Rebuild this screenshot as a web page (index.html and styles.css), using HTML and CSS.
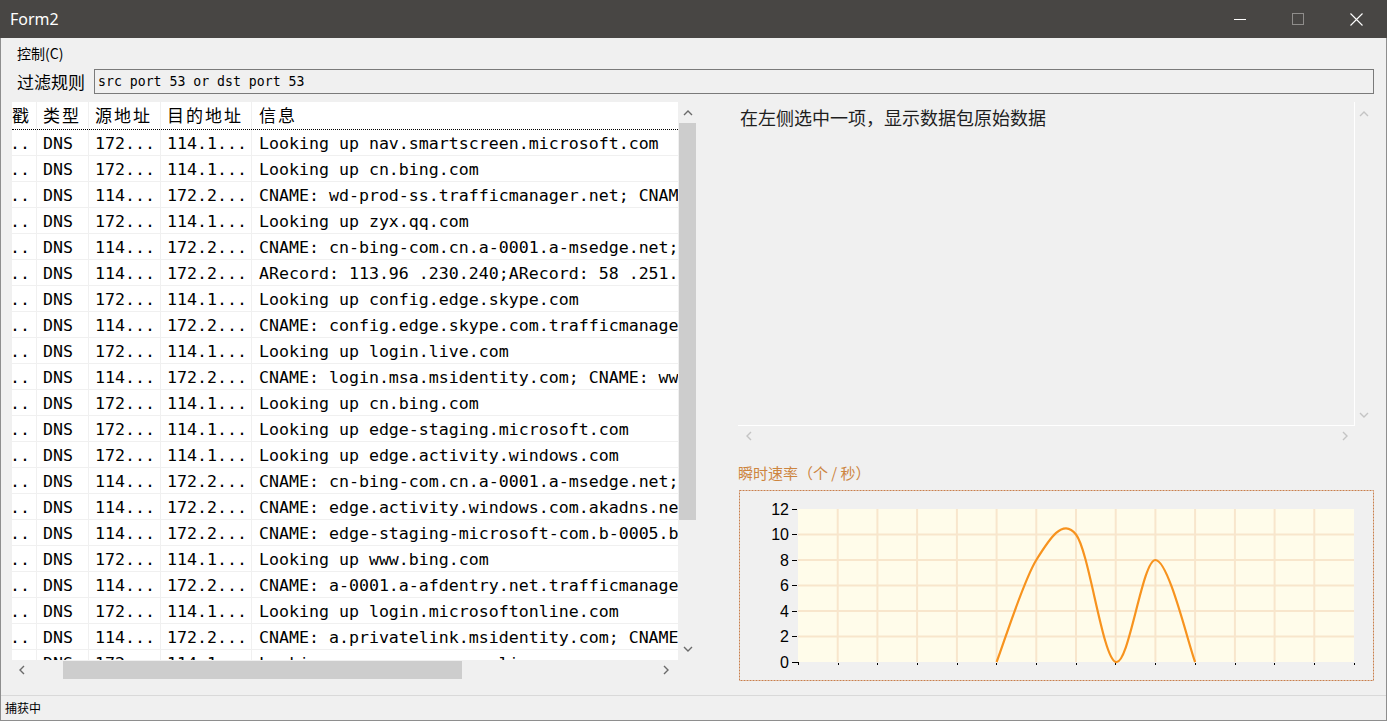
FILE: index.html
```html
<!DOCTYPE html>
<html lang="zh">
<head>
<meta charset="utf-8">
<title>Form2</title>
<link rel="stylesheet" href="styles.css">
</head>
<body>
<div class="window">
  <div class="titlebar">
    <span class="title">Form2</span>
    <div class="caption">
      <div class="cbtn"><svg width="12" height="12" viewBox="0 0 12 12"><line x1="0" y1="6.5" x2="12" y2="6.5" stroke="#fff" stroke-width="1"/></svg></div>
      <div class="cbtn"><svg width="12" height="12" viewBox="0 0 12 12"><rect x="0.5" y="0.5" width="11" height="11" fill="none" stroke="#8f8d8b" stroke-width="1"/></svg></div>
      <div class="cbtn"><svg width="13" height="13" viewBox="0 0 13 13"><path d="M0.5 0.5 L12.5 12.5 M12.5 0.5 L0.5 12.5" stroke="#fff" stroke-width="1.1" fill="none"/></svg></div>
    </div>
  </div>
  <div class="client">
    <div class="menubar"><span>控制(C)</span></div>
    <div class="filter">
      <span class="filter-label">过滤规则</span>
      <div class="filter-input">src port 53 or dst port 53</div>
    </div>
    <div class="main">
      <div class="left">
        <div class="gridarea">
          <div class="table">
            <div class="row head"><div class="c c1 hc1">戳</div><div class="c c2">类型</div><div class="c c3">源地址</div><div class="c c4">目的地址</div><div class="c c5">信息</div></div>
            <div class="row"><div class="c c1">..</div><div class="c c2">DNS</div><div class="c c3">172...</div><div class="c c4">114.1...</div><div class="c c5">Looking up nav.smartscreen.microsoft.com</div></div>
            <div class="row"><div class="c c1">..</div><div class="c c2">DNS</div><div class="c c3">172...</div><div class="c c4">114.1...</div><div class="c c5">Looking up cn.bing.com</div></div>
            <div class="row"><div class="c c1">..</div><div class="c c2">DNS</div><div class="c c3">114...</div><div class="c c4">172.2...</div><div class="c c5">CNAME: wd-prod-ss.trafficmanager.net; CNAME: wd-prod-ss-eu.cloudapp.net</div></div>
            <div class="row"><div class="c c1">..</div><div class="c c2">DNS</div><div class="c c3">172...</div><div class="c c4">114.1...</div><div class="c c5">Looking up zyx.qq.com</div></div>
            <div class="row"><div class="c c1">..</div><div class="c c2">DNS</div><div class="c c3">114...</div><div class="c c4">172.2...</div><div class="c c5">CNAME: cn-bing-com.cn.a-0001.a-msedge.net; CNAME: a-0001.a-msedge.net</div></div>
            <div class="row"><div class="c c1">..</div><div class="c c2">DNS</div><div class="c c3">114...</div><div class="c c4">172.2...</div><div class="c c5">ARecord: 113.96 .230.240;ARecord: 58 .251.111.106</div></div>
            <div class="row"><div class="c c1">..</div><div class="c c2">DNS</div><div class="c c3">172...</div><div class="c c4">114.1...</div><div class="c c5">Looking up config.edge.skype.com</div></div>
            <div class="row"><div class="c c1">..</div><div class="c c2">DNS</div><div class="c c3">114...</div><div class="c c4">172.2...</div><div class="c c5">CNAME: config.edge.skype.com.trafficmanager.net</div></div>
            <div class="row"><div class="c c1">..</div><div class="c c2">DNS</div><div class="c c3">172...</div><div class="c c4">114.1...</div><div class="c c5">Looking up login.live.com</div></div>
            <div class="row"><div class="c c1">..</div><div class="c c2">DNS</div><div class="c c3">114...</div><div class="c c4">172.2...</div><div class="c c5">CNAME: login.msa.msidentity.com; CNAME: www.tm.lg.prod.aadmsa.akadns.net</div></div>
            <div class="row"><div class="c c1">..</div><div class="c c2">DNS</div><div class="c c3">172...</div><div class="c c4">114.1...</div><div class="c c5">Looking up cn.bing.com</div></div>
            <div class="row"><div class="c c1">..</div><div class="c c2">DNS</div><div class="c c3">172...</div><div class="c c4">114.1...</div><div class="c c5">Looking up edge-staging.microsoft.com</div></div>
            <div class="row"><div class="c c1">..</div><div class="c c2">DNS</div><div class="c c3">172...</div><div class="c c4">114.1...</div><div class="c c5">Looking up edge.activity.windows.com</div></div>
            <div class="row"><div class="c c1">..</div><div class="c c2">DNS</div><div class="c c3">114...</div><div class="c c4">172.2...</div><div class="c c5">CNAME: cn-bing-com.cn.a-0001.a-msedge.net; CNAME: a-0001.a-msedge.net</div></div>
            <div class="row"><div class="c c1">..</div><div class="c c2">DNS</div><div class="c c3">114...</div><div class="c c4">172.2...</div><div class="c c5">CNAME: edge.activity.windows.com.akadns.net</div></div>
            <div class="row"><div class="c c1">..</div><div class="c c2">DNS</div><div class="c c3">114...</div><div class="c c4">172.2...</div><div class="c c5">CNAME: edge-staging-microsoft-com.b-0005.b-msedge.net</div></div>
            <div class="row"><div class="c c1">..</div><div class="c c2">DNS</div><div class="c c3">172...</div><div class="c c4">114.1...</div><div class="c c5">Looking up www.bing.com</div></div>
            <div class="row"><div class="c c1">..</div><div class="c c2">DNS</div><div class="c c3">114...</div><div class="c c4">172.2...</div><div class="c c5">CNAME: a-0001.a-afdentry.net.trafficmanager.net</div></div>
            <div class="row"><div class="c c1">..</div><div class="c c2">DNS</div><div class="c c3">172...</div><div class="c c4">114.1...</div><div class="c c5">Looking up login.microsoftonline.com</div></div>
            <div class="row"><div class="c c1">..</div><div class="c c2">DNS</div><div class="c c3">114...</div><div class="c c4">172.2...</div><div class="c c5">CNAME: a.privatelink.msidentity.com; CNAME: prda.aadg.msidentity.com</div></div>
            <div class="row"><div class="c c1">..</div><div class="c c2">DNS</div><div class="c c3">172...</div><div class="c c4">114.1...</div><div class="c c5">Looking up www.msn.cn.onlive.com</div></div>
          </div>
          <div class="vscroll">
            <div class="sbtn vbtn"><svg width="10" height="7" viewBox="0 0 10 7"><polyline points="1,6 5,2 9,6" fill="none" stroke="#6a6a6a" stroke-width="1.4"/></svg></div>
            <div class="vthumb"></div>
            <div class="spacer"></div>
            <div class="sbtn vbtn"><svg width="10" height="7" viewBox="0 0 10 7"><polyline points="1,1 5,5 9,1" fill="none" stroke="#6a6a6a" stroke-width="1.4"/></svg></div>
          </div>
        </div>
        <div class="hrow">
          <div class="hscroll">
            <div class="sbtn hbtn-l"><svg width="7" height="10" viewBox="0 0 7 10"><polyline points="6,1 2,5 6,9" fill="none" stroke="#6a6a6a" stroke-width="1.4"/></svg></div>
            <div class="hthumb"></div>
            <div class="spacer"></div>
            <div class="sbtn hbtn-r"><svg width="7" height="10" viewBox="0 0 7 10"><polyline points="1,1 5,5 1,9" fill="none" stroke="#6a6a6a" stroke-width="1.4"/></svg></div>
          </div>
          <div class="corner"></div>
        </div>
      </div>
      <div class="right">
        <div class="rawbox">
          <div class="rawtop">
            <div class="rawtext">在左侧选中一项，显示数据包原始数据</div>
            <div class="rawv">
              <div class="sbtn rbtn"><svg width="10" height="7" viewBox="0 0 10 7"><polyline points="1,6 5,2 9,6" fill="none" stroke="#c4c4c4" stroke-width="1.4"/></svg></div>
              <div class="spacer"></div>
              <div class="sbtn rbtn"><svg width="10" height="7" viewBox="0 0 10 7"><polyline points="1,1 5,5 9,1" fill="none" stroke="#c4c4c4" stroke-width="1.4"/></svg></div>
            </div>
          </div>
          <div class="rawh">
            <div class="sbtn rhbtn"><svg width="7" height="10" viewBox="0 0 7 10"><polyline points="6,1 2,5 6,9" fill="none" stroke="#c4c4c4" stroke-width="1.4"/></svg></div>
            <div class="sbtn rhbtn"><svg width="7" height="10" viewBox="0 0 7 10"><polyline points="1,1 5,5 1,9" fill="none" stroke="#c4c4c4" stroke-width="1.4"/></svg></div>
          </div>
        </div>
        <div class="chart-title">瞬时速率（个 / 秒）</div>
        <div class="chart">
          <svg width="635" height="191" viewBox="739 490 635 191">
            <rect x="739.5" y="490.5" width="634" height="190" fill="#f0f0f0" stroke="#c97f4c" stroke-width="1" stroke-dasharray="2 1"/>
            <rect x="798" y="509" width="556" height="153" fill="#fffcea"/>
            <g stroke="#f8e6cc" stroke-width="2">
              <line x1="798" y1="534.5" x2="1354" y2="534.5"/>
              <line x1="798" y1="560" x2="1354" y2="560"/>
              <line x1="798" y1="585.5" x2="1354" y2="585.5"/>
              <line x1="798" y1="611" x2="1354" y2="611"/>
              <line x1="798" y1="636.5" x2="1354" y2="636.5"/>
              <line x1="837.7" y1="509" x2="837.7" y2="662"/>
              <line x1="877.4" y1="509" x2="877.4" y2="662"/>
              <line x1="917.1" y1="509" x2="917.1" y2="662"/>
              <line x1="956.9" y1="509" x2="956.9" y2="662"/>
              <line x1="996.6" y1="509" x2="996.6" y2="662"/>
              <line x1="1036.3" y1="509" x2="1036.3" y2="662"/>
              <line x1="1076" y1="509" x2="1076" y2="662"/>
              <line x1="1115.7" y1="509" x2="1115.7" y2="662"/>
              <line x1="1155.4" y1="509" x2="1155.4" y2="662"/>
              <line x1="1195.1" y1="509" x2="1195.1" y2="662"/>
              <line x1="1234.9" y1="509" x2="1234.9" y2="662"/>
              <line x1="1274.6" y1="509" x2="1274.6" y2="662"/>
              <line x1="1314.3" y1="509" x2="1314.3" y2="662"/>
            </g>
            <g stroke="#000" stroke-width="1">
              <line x1="792" y1="509.5" x2="797" y2="509.5"/>
              <line x1="792" y1="534.5" x2="797" y2="534.5"/>
              <line x1="792" y1="560.5" x2="797" y2="560.5"/>
              <line x1="792" y1="585.5" x2="797" y2="585.5"/>
              <line x1="792" y1="611.5" x2="797" y2="611.5"/>
              <line x1="792" y1="636.5" x2="797" y2="636.5"/>
              <line x1="792" y1="662.5" x2="798" y2="662.5"/>
              <line x1="798.5" y1="662" x2="798.5" y2="665"/>
              <line x1="838.5" y1="663" x2="838.5" y2="665"/>
              <line x1="877.5" y1="663" x2="877.5" y2="665"/>
              <line x1="917.5" y1="663" x2="917.5" y2="665"/>
              <line x1="957.5" y1="663" x2="957.5" y2="665"/>
              <line x1="996.5" y1="663" x2="996.5" y2="665"/>
              <line x1="1036.5" y1="663" x2="1036.5" y2="665"/>
              <line x1="1076.5" y1="663" x2="1076.5" y2="665"/>
              <line x1="1115.5" y1="663" x2="1115.5" y2="665"/>
              <line x1="1155.5" y1="663" x2="1155.5" y2="665"/>
              <line x1="1195.5" y1="663" x2="1195.5" y2="665"/>
              <line x1="1235.5" y1="663" x2="1235.5" y2="665"/>
              <line x1="1274.5" y1="663" x2="1274.5" y2="665"/>
              <line x1="1314.5" y1="663" x2="1314.5" y2="665"/>
              <line x1="1354.5" y1="663" x2="1354.5" y2="665"/>
            </g>
            <g class="ylab">
              <text x="789" y="515">12</text>
              <text x="789" y="540">10</text>
              <text x="789" y="566">8</text>
              <text x="789" y="591">6</text>
              <text x="789" y="617">4</text>
              <text x="789" y="642">2</text>
              <text x="789" y="668">0</text>
            </g>
            <path d="M996.6 662 C1003.2 645 1023.1 581.3 1036.3 560 C1049.5 538.8 1062.8 517.5 1076 534.5 C1089.2 551.5 1102.5 657.8 1115.7 662 C1128.9 666.3 1142.2 560 1155.4 560 C1168.7 560 1188.5 645 1195.1 662" fill="none" stroke="#f7931e" stroke-width="2.2"/>
          </svg>
        </div>
      </div>
    </div>
    <div class="statusbar">捕获中</div>
  </div>
</div>
</body>
</html>
```
FILE: styles.css
```css
* { box-sizing: border-box; }
html, body { margin: 0; padding: 0; }
body {
  font-family: "Noto Sans CJK SC", "Noto Sans", sans-serif;
  color: #000;
  background: #f0f0f0;
}
.window {
  width: 1387px;
  height: 721px;
  display: flex;
  flex-direction: column;
  overflow: hidden;
}
.titlebar {
  height: 38px;
  flex: none;
  background: #484644;
  display: flex;
  align-items: center;
}
.title {
  flex: 1;
  padding-left: 10px;
  color: #fff;
  font: 16px "Noto Sans", sans-serif;
}
.caption {
  display: flex;
  height: 38px;
  padding-right: 2px;
}
.cbtn {
  width: 58px;
  height: 38px;
  display: flex;
  align-items: center;
  justify-content: center;
}
.cbtn svg { display: block; }
.client {
  flex: 1;
  min-height: 0;
  background: #f0f0f0;
  border: 1px solid #8e8e8e;
  border-top: none;
  display: flex;
  flex-direction: column;
}
.menubar {
  height: 30px;
  flex: none;
  padding-left: 16px;
  padding-bottom: 1px;
  display: flex;
  align-items: center;
  font-size: 14px;
}
.filter {
  margin-top: 1px;
  height: 25px;
  flex: none;
  display: flex;
  align-items: center;
  padding: 0 12px 0 16px;
}
.filter-label {
  width: 77px;
  flex: none;
  font-size: 17px;
  line-height: 25px;
}
.filter-input {
  flex: 1;
  height: 25px;
  border: 1px solid #7a7a7a;
  background: #f0f0f0;
  font: 13.2px "DejaVu Sans Mono", monospace;
  line-height: 23px;
  padding-left: 3px;
  white-space: nowrap;
}
.main {
  height: 593px;
  flex: none;
  margin-top: 8px;
  display: flex;
}
.left {
  margin-left: 11px;
  width: 685px;
  display: flex;
  flex-direction: column;
}
.gridarea {
  height: 558px;
  display: flex;
}
.table {
  width: 666px;
  height: 558px;
  background: #fff;
  overflow: hidden;
}
.row {
  display: flex;
  height: 26px;
  border-bottom: 1px solid #f0f0f0;
  font: 16.6px "DejaVu Sans Mono", monospace;
  line-height: 27px;
  white-space: nowrap;
}
.row.head {
  height: 28px;
  border-bottom: 1px dotted #000;
  font: 17px "Noto Sans CJK SC", sans-serif;
  letter-spacing: 2px;
  line-height: 26px;
}
.c {
  flex: none;
  overflow: hidden;
  border-right: 1px solid #f0f0f0;
  padding-left: 6px;
}
.c1 { width: 25px; padding-left: 0; text-indent: -2px; }
.hc1 { text-indent: 0; }
.c2 { width: 52px; }
.c3 { width: 72px; }
.c4 { width: 91px; }
.c5 { flex: 1; border-right: none; padding-left: 7px; }
.vscroll {
  width: 19px;
  height: 558px;
  display: flex;
  flex-direction: column;
  background: #f0f0f0;
}
.sbtn {
  display: flex;
  align-items: center;
  justify-content: center;
  flex: none;
}
.sbtn svg { display: block; }
.vbtn { height: 21px; }
.vthumb {
  height: 397px;
  margin: 0 1px;
  background: #cdcdcd;
  flex: none;
}
.spacer { flex: 1; }
.hrow {
  height: 20px;
  display: flex;
}
.hscroll {
  width: 666px;
  display: flex;
  align-items: center;
  background: #f0f0f0;
}
.hbtn-l { width: 18px; height: 20px; }
.hthumb {
  margin-left: 33px;
  width: 399px;
  height: 18px;
  background: #cdcdcd;
  flex: none;
}
.hbtn-r { width: 24px; height: 20px; }
.corner { flex: 1; }
.right {
  margin-left: 41px;
  width: 636px;
  display: flex;
  flex-direction: column;
}
.rawbox {
  height: 343px;
  display: flex;
  flex-direction: column;
}
.rawtop {
  height: 324px;
  display: flex;
}
.rawtext {
  width: 617px;
  border-right: 1px solid #fff;
  border-bottom: 1px solid #fff;
  padding: 3px 0 0 2px;
  font-size: 18px;
  line-height: 24px;
  color: #1e1e1e;
}
.rawv {
  width: 18px;
  display: flex;
  flex-direction: column;
}
.rbtn { height: 22px; }
.rawh {
  width: 617px;
  height: 19px;
  display: flex;
  justify-content: space-between;
  align-items: center;
}
.rhbtn { width: 20px; height: 19px; }
.chart-title {
  margin-top: 19px;
  font-size: 15px;
  line-height: 18px;
  color: #cd853f;
}
.chart {
  margin-top: 8px;
  margin-left: 1px;
  width: 635px;
  height: 191px;
}
.chart svg { display: block; }
.ylab text {
  font: 16px "Liberation Sans", Arial, sans-serif;
  fill: #000;
  text-anchor: end;
}
.statusbar {
  height: 25px;
  flex: none;
  border-top: 1px solid #d9d9d9;
  padding-left: 4px;
  font-size: 12px;
  line-height: 24px;
}
```
